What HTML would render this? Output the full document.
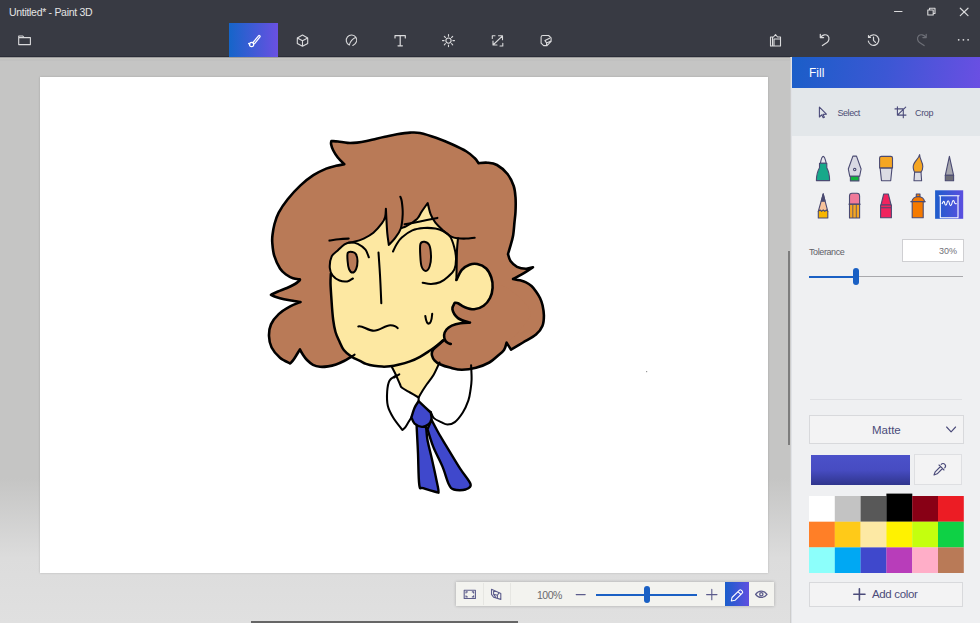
<!DOCTYPE html>
<html><head><meta charset="utf-8">
<style>
*{margin:0;padding:0;box-sizing:border-box}
html,body{width:980px;height:623px;overflow:hidden;font-family:"Liberation Sans",sans-serif}
body{position:relative;background:#c6c6c6}
.a{position:absolute}
#top{left:0;top:0;width:980px;height:57px;background:#383a43}
#title{left:9px;top:5.8px;font-size:10.5px;letter-spacing:-0.3px;color:#e4e4e4;white-space:nowrap}
#work{left:0;top:57px;width:791px;height:566px;background:linear-gradient(#c5c5c4 0,#c5c5c4 421px,#dcdcdc 501px,#e0e0e0 566px)}
#shadowtop{left:0;top:57px;width:791px;height:4px;background:linear-gradient(#8a8a8c 0,#c7c6c3 1.5px,#c7c6c3 2px,#bdbdbd 3px,#c5c5c4 4px)}
#canvas{left:40px;top:77px;width:728px;height:496px;background:#fff;box-shadow:0 0 2px rgba(0,0,0,.18)}
#panel{left:791px;top:57px;width:189px;height:566px;background:#eff0f2;border-left:1px solid #e0e2e6}
#phead{left:0;top:0;width:189px;height:31px;background:linear-gradient(100deg,#1a5ec8 0%,#3c57d4 50%,#6b4fe3 100%)}
#phead span{position:absolute;left:17px;top:9px;color:#fff;font-size:12px;letter-spacing:0}
#selcrop{left:0;top:31px;width:189px;height:47.5px;background:#e3e7ea}
.pt{position:absolute;color:#4c4c74;font-size:10px;white-space:nowrap}
svg{position:absolute;overflow:visible}
.ico{stroke:#d6d6d8;fill:none;stroke-width:1.1}
</style></head><body>
<div id="top" class="a"></div>
<div class="a" style="left:0;top:56px;width:791px;height:1px;background:#2b2d37"></div>
<div id="title" class="a">Untitled* - Paint 3D</div>
<div id="work" class="a"></div>
<div id="shadowtop" class="a"></div>
<div id="canvas" class="a"></div>
<div class="a" style="left:789.5px;top:57px;width:1.5px;height:566px;background:#cdcdcd"></div>
<svg width="980" height="623" viewBox="0 0 980 623" style="left:0;top:0">
<g stroke="none">
<path fill="#b97a57" d="M351.6 356.6 C350.3 357.3 346.6 359.7 344.0 361.0 C341.4 362.3 338.7 363.6 336.0 364.5 C333.3 365.4 330.7 366.0 328.0 366.4 C325.3 366.8 322.5 367.1 320.0 366.8 C317.5 366.5 315.2 365.9 313.0 364.8 C310.8 363.7 308.8 361.8 307.0 360.0 C305.2 358.2 303.7 355.8 302.5 354.0 C301.3 352.2 300.3 350.2 299.9 349.4 C298.9 351.0 295.6 356.6 294.0 359.0 C292.4 361.4 290.8 362.8 290.2 363.5 C288.5 362.6 283.1 360.5 280.0 357.8 C276.9 355.1 273.4 351.1 271.6 347.5 C269.8 343.9 269.1 339.9 269.0 336.0 C268.9 332.1 269.4 328.0 271.0 324.4 C272.6 320.8 275.5 317.1 278.7 314.1 C281.9 311.1 286.6 308.4 290.2 306.4 C293.8 304.4 298.8 302.7 300.5 302.0 C299.4 301.8 296.8 301.5 294.0 301.0 C291.2 300.5 287.0 299.9 284.0 299.2 C281.0 298.5 278.2 297.7 276.0 297.0 C273.8 296.3 271.8 295.2 271.0 294.8 C272.2 294.2 275.3 292.6 278.0 291.5 C280.7 290.4 284.2 289.2 287.0 288.0 C289.8 286.8 292.9 285.2 295.0 284.0 C297.1 282.8 298.7 281.3 299.5 280.5 C300.3 279.7 299.8 279.6 299.9 279.4 C298.8 279.2 295.3 279.0 293.0 278.2 C290.7 277.4 288.2 276.1 286.0 274.5 C283.8 272.9 282.0 271.6 280.0 268.5 C278.0 265.4 275.5 259.9 274.2 255.7 C272.9 251.4 272.6 246.4 272.3 243.0 C272.0 239.6 272.1 238.2 272.5 235.0 C272.9 231.8 273.5 227.7 274.5 224.0 C275.5 220.3 276.5 216.7 278.7 212.6 C280.9 208.5 284.1 203.8 287.7 199.3 C291.3 194.8 296.2 189.4 300.5 185.4 C304.8 181.4 309.1 178.0 313.4 175.2 C317.7 172.4 322.4 170.2 326.2 168.6 C330.0 167.0 333.0 166.5 336.0 165.8 C339.0 165.1 342.9 164.5 344.3 164.2 C343.2 163.1 339.6 159.8 337.8 157.5 C336.0 155.2 334.4 152.7 333.3 150.5 C332.2 148.3 331.4 145.8 331.1 144.2 C330.8 142.6 331.3 141.5 331.4 141.0 C332.5 141.1 335.3 141.2 338.0 141.5 C340.7 141.8 344.3 142.7 347.5 142.9 C350.7 143.1 353.9 142.9 357.1 142.6 C360.3 142.3 363.5 141.7 366.7 141.0 C369.9 140.3 373.3 139.4 376.4 138.7 C379.4 138.0 381.6 137.5 385.0 136.8 C388.4 136.1 392.8 135.0 397.0 134.3 C401.2 133.6 406.2 132.8 410.0 132.6 C413.8 132.4 415.7 132.1 420.0 133.0 C424.3 133.9 430.7 135.9 436.0 137.8 C441.3 139.7 446.9 142.0 452.0 144.3 C457.1 146.6 462.7 149.2 466.5 151.5 C470.3 153.8 472.6 156.1 474.6 158.0 C476.6 159.9 477.9 162.3 478.6 163.2 C480.1 163.1 484.3 162.4 487.4 162.7 C490.5 163.0 493.6 163.1 497.0 165.0 C500.4 166.9 504.7 170.5 507.5 174.0 C510.3 177.5 512.4 182.1 513.7 186.0 C515.0 189.9 515.2 192.9 515.5 197.2 C515.8 201.5 515.7 207.6 515.5 211.7 C515.3 215.8 514.9 218.1 514.5 222.0 C514.1 225.9 513.8 231.5 513.1 235.4 C512.4 239.3 511.4 242.6 510.5 245.7 C509.6 248.8 508.4 252.6 508.0 254.0 C508.4 255.2 509.0 259.0 510.5 261.1 C512.0 263.2 514.4 265.6 517.0 266.9 C519.6 268.2 523.2 268.8 525.9 268.8 C528.6 268.9 531.8 267.5 533.0 267.2 C531.6 268.1 528.0 270.6 524.7 272.6 C521.4 274.6 515.0 277.9 513.1 279.0 C514.2 279.2 517.9 279.8 520.0 280.3 C522.1 280.9 524.1 281.4 526.0 282.3 C527.9 283.2 529.8 284.5 531.5 286.0 C533.2 287.5 534.6 289.5 536.0 291.5 C537.4 293.5 538.9 295.7 540.0 298.0 C541.1 300.3 542.0 302.6 542.6 305.5 C543.2 308.4 543.9 312.0 543.9 315.4 C543.9 318.8 543.7 322.8 542.4 326.0 C541.1 329.2 539.2 331.9 536.0 334.6 C532.8 337.4 527.2 340.0 523.0 342.5 C518.8 345.0 513.0 348.4 511.0 349.6 C510.3 348.4 507.3 343.8 506.6 342.6 C506.2 343.8 505.6 347.7 504.0 350.0 C502.4 352.3 499.4 354.4 497.0 356.5 C494.6 358.6 492.8 360.6 489.3 362.5 C485.8 364.4 480.6 366.6 476.0 367.8 C471.4 369.0 466.3 369.8 462.0 369.8 C457.7 369.8 453.7 368.5 450.0 367.6 C446.3 366.7 442.6 365.4 440.0 364.2 C437.4 363.0 435.8 361.8 434.5 360.3 C433.2 358.9 432.4 357.1 432.0 355.5 C431.6 353.9 431.8 352.4 432.4 351.0 C433.0 349.6 434.3 348.5 435.5 347.3 C436.7 346.1 438.2 345.1 439.5 344.0 C440.8 342.9 442.8 341.1 443.5 340.5 L400 345 Z"/>
<path fill="#fde8a2" d="M330.5 278.0 C330.4 276.3 329.6 271.6 329.8 268.0 C330.0 264.4 330.3 259.4 331.7 256.4 C333.1 253.4 335.9 252.2 338.0 250.2 C340.1 248.2 342.4 245.7 344.5 244.4 C346.6 243.1 349.3 242.9 350.9 242.5 C352.5 242.1 352.0 242.5 354.1 241.8 C356.2 241.2 360.5 240.1 363.7 238.6 C366.9 237.1 370.3 235.4 373.4 232.8 C376.4 230.2 380.0 225.9 382.0 223.2 C384.0 220.5 384.6 219.1 385.2 216.7 C385.8 214.3 385.8 210.1 385.9 208.8 C386.0 210.5 386.2 214.8 386.4 218.9 C386.6 223.0 386.9 229.0 387.3 233.3 C387.7 237.6 388.6 243.0 388.8 244.9 C389.8 243.8 393.2 240.4 395.0 238.1 C396.8 235.8 398.4 232.7 399.5 231.0 C400.6 229.3 401.4 228.5 401.8 228.0 C402.5 227.7 404.4 227.1 406.0 226.3 C407.6 225.5 409.8 224.1 411.3 223.2 C412.8 222.2 413.9 221.5 415.0 220.6 C416.1 219.7 417.1 219.1 418.2 217.5 C419.3 215.9 420.3 213.7 421.9 211.3 C423.5 208.9 426.7 204.4 427.7 203.0 C428.2 204.8 429.3 210.8 430.6 214.1 C431.9 217.4 433.3 220.0 435.4 222.7 C437.5 225.4 440.5 228.1 443.1 230.4 C445.8 232.7 448.8 235.3 451.3 236.6 C453.8 237.9 456.9 238.0 458.0 238.3 C457.8 240.2 457.2 245.6 457.0 250.0 C456.8 254.4 456.8 260.0 456.7 265.0 C456.6 270.0 456.4 277.5 456.4 280.0 C457.3 278.3 459.6 272.4 461.8 269.8 C464.0 267.2 466.9 265.7 469.5 264.7 C472.1 263.7 474.4 263.4 477.2 264.0 C480.0 264.6 483.8 266.2 486.2 268.5 C488.6 270.8 490.2 274.3 491.3 277.5 C492.4 280.7 492.8 284.4 492.6 287.8 C492.4 291.2 491.5 295.0 490.0 298.0 C488.5 301.0 486.2 303.8 483.6 305.7 C481.0 307.6 477.3 309.1 474.1 309.3 C470.9 309.5 467.1 308.0 464.4 307.0 C461.7 306.0 459.6 303.9 458.0 303.2 C456.4 302.5 455.3 302.9 454.8 302.8 C458.7 304.3 475.1 307.1 478.0 312.0 C480.9 316.9 477.8 327.3 472.0 332.0 C466.2 336.7 447.9 338.8 443.1 340.2 C442.1 341.0 439.6 343.4 437.3 345.2 C435.1 347.0 432.5 348.9 429.6 350.8 C426.7 352.7 423.3 355.0 420.0 356.8 C416.7 358.6 413.6 360.1 410.0 361.4 C406.4 362.7 401.5 364.0 398.2 364.8 C394.9 365.6 392.7 366.0 390.0 366.3 C387.3 366.6 384.8 366.7 382.1 366.6 C379.4 366.5 376.7 366.2 374.0 365.8 C371.3 365.4 368.3 364.7 366.0 363.9 C363.7 363.1 362.4 362.1 360.0 360.9 C357.6 359.7 354.3 358.6 351.6 356.8 C348.9 355.0 345.9 352.7 343.8 350.0 C341.7 347.3 340.4 343.5 339.0 340.5 C337.6 337.5 336.5 335.4 335.5 332.0 C334.5 328.6 333.9 325.3 333.2 320.0 C332.5 314.7 331.9 306.1 331.5 300.0 C331.1 293.9 330.7 287.1 330.5 283.4 C330.3 279.7 330.5 278.9 330.5 278.0 Z"/>
<path fill="#fde8a2" d="M391.6 366.6 L396.7 375.5 L400.5 385.8 L409.5 392.2 L418.6 397.5 L422.4 391.0 L427.0 384.0 L433.5 375.0 L439.5 362.5 L440.0 350.0 L410.0 355.0 L390.0 362.0 Z"/>
<path fill="#b97a57" d="M443.5 340.5 C442.8 341.1 440.8 342.9 439.5 344.0 C438.2 345.1 436.7 346.1 435.5 347.3 C434.3 348.5 433.0 349.6 432.4 351.0 C431.8 352.4 431.6 353.9 432.0 355.5 C432.4 357.1 433.2 358.9 434.5 360.3 C435.8 361.8 437.4 363.0 440.0 364.2 C442.6 365.4 446.3 366.7 450.0 367.6 C453.7 368.5 457.7 369.8 462.0 369.8 C466.3 369.8 471.4 369.0 476.0 367.8 C480.6 366.6 485.8 364.4 489.3 362.5 C492.8 360.6 494.6 358.6 497.0 356.5 C499.4 354.4 502.4 352.3 504.0 350.0 C505.6 347.7 506.2 343.8 506.6 342.6 C508.8 340.5 516.1 335.4 520.0 330.0 C523.9 324.6 533.3 317.5 530.0 310.0 C526.7 302.5 507.7 285.7 500.0 285.0 C492.3 284.3 487.9 301.6 483.6 305.7 C479.3 309.8 477.3 309.1 474.1 309.3 C470.9 309.5 467.1 308.0 464.4 307.0 C461.7 306.0 459.6 303.9 458.0 303.2 C456.4 302.5 455.3 302.9 454.8 302.8 C454.4 303.9 451.9 306.8 452.4 309.3 C452.9 311.9 455.1 315.9 458.0 318.1 C460.9 320.3 468.0 321.9 470.0 322.6 C468.4 322.7 463.5 322.7 460.5 323.2 C457.5 323.7 454.1 324.6 451.8 325.6 C449.5 326.7 447.8 327.9 446.5 329.5 C445.2 331.1 444.3 333.3 444.1 335.2 C443.9 337.1 444.7 339.6 445.5 341.0 C446.3 342.4 448.0 342.9 448.9 343.4 C449.8 343.9 450.5 343.8 450.8 343.9 Z"/>
<path fill="#fde8a2" d="M456.4 280.0 C457.3 278.3 459.6 272.4 461.8 269.8 C464.0 267.2 466.9 265.7 469.5 264.7 C472.1 263.7 474.4 263.4 477.2 264.0 C480.0 264.6 483.8 266.2 486.2 268.5 C488.6 270.8 490.2 274.3 491.3 277.5 C492.4 280.7 492.8 284.4 492.6 287.8 C492.4 291.2 491.5 295.0 490.0 298.0 C488.5 301.0 486.2 303.8 483.6 305.7 C481.0 307.6 477.3 309.1 474.1 309.3 C470.9 309.5 467.1 308.0 464.4 307.0 C461.7 306.0 459.6 303.9 458.0 303.2 C456.4 302.5 455.3 302.9 454.8 302.8 Z"/>
<path fill="#b97a57" stroke="#000" stroke-width="2" d="M352.5 252.0 C353.9 252.2 355.2 252.8 356.0 254.3 C356.8 255.8 357.5 258.6 357.5 261.0 C357.5 263.4 357.0 266.9 356.2 268.8 C355.4 270.7 353.8 272.6 352.6 272.6 C351.4 272.6 349.8 270.9 349.0 269.0 C348.2 267.1 347.8 263.7 347.6 261.0 C347.4 258.3 347.0 254.3 347.8 252.8 C348.6 251.3 351.1 251.8 352.5 252.0 Z"/>
<path fill="#b97a57" stroke="#000" stroke-width="2" d="M424.5 241.8 C426.0 242.0 428.2 242.8 429.3 245.2 C430.4 247.6 430.9 252.4 431.0 256.0 C431.1 259.6 430.5 264.0 429.6 266.5 C428.7 269.0 427.1 270.9 425.8 270.9 C424.5 270.9 422.5 269.0 421.6 266.5 C420.7 264.0 420.5 259.8 420.3 256.0 C420.1 252.2 419.7 246.4 420.4 244.0 C421.1 241.6 423.0 241.6 424.5 241.8 Z"/>
</g>
<g fill="none" stroke="#000" stroke-linecap="round" stroke-linejoin="round">
<path stroke-width="2.6" d="M351.6 356.6 C350.3 357.3 346.6 359.7 344.0 361.0 C341.4 362.3 338.7 363.6 336.0 364.5 C333.3 365.4 330.7 366.0 328.0 366.4 C325.3 366.8 322.5 367.1 320.0 366.8 C317.5 366.5 315.2 365.9 313.0 364.8 C310.8 363.7 308.8 361.8 307.0 360.0 C305.2 358.2 303.7 355.8 302.5 354.0 C301.3 352.2 300.3 350.2 299.9 349.4 C298.9 351.0 295.6 356.6 294.0 359.0 C292.4 361.4 290.8 362.8 290.2 363.5 C288.5 362.6 283.1 360.5 280.0 357.8 C276.9 355.1 273.4 351.1 271.6 347.5 C269.8 343.9 269.1 339.9 269.0 336.0 C268.9 332.1 269.4 328.0 271.0 324.4 C272.6 320.8 275.5 317.1 278.7 314.1 C281.9 311.1 286.6 308.4 290.2 306.4 C293.8 304.4 298.8 302.7 300.5 302.0 C299.4 301.8 296.8 301.5 294.0 301.0 C291.2 300.5 287.0 299.9 284.0 299.2 C281.0 298.5 278.2 297.7 276.0 297.0 C273.8 296.3 271.8 295.2 271.0 294.8 C272.2 294.2 275.3 292.6 278.0 291.5 C280.7 290.4 284.2 289.2 287.0 288.0 C289.8 286.8 292.9 285.2 295.0 284.0 C297.1 282.8 298.7 281.3 299.5 280.5 C300.3 279.7 299.8 279.6 299.9 279.4 C298.8 279.2 295.3 279.0 293.0 278.2 C290.7 277.4 288.2 276.1 286.0 274.5 C283.8 272.9 282.0 271.6 280.0 268.5 C278.0 265.4 275.5 259.9 274.2 255.7 C272.9 251.4 272.6 246.4 272.3 243.0 C272.0 239.6 272.1 238.2 272.5 235.0 C272.9 231.8 273.5 227.7 274.5 224.0 C275.5 220.3 276.5 216.7 278.7 212.6 C280.9 208.5 284.1 203.8 287.7 199.3 C291.3 194.8 296.2 189.4 300.5 185.4 C304.8 181.4 309.1 178.0 313.4 175.2 C317.7 172.4 322.4 170.2 326.2 168.6 C330.0 167.0 333.0 166.5 336.0 165.8 C339.0 165.1 342.9 164.5 344.3 164.2 C343.2 163.1 339.6 159.8 337.8 157.5 C336.0 155.2 334.4 152.7 333.3 150.5 C332.2 148.3 331.4 145.8 331.1 144.2 C330.8 142.6 331.3 141.5 331.4 141.0 C332.5 141.1 335.3 141.2 338.0 141.5 C340.7 141.8 344.3 142.7 347.5 142.9 C350.7 143.1 353.9 142.9 357.1 142.6 C360.3 142.3 363.5 141.7 366.7 141.0 C369.9 140.3 373.3 139.4 376.4 138.7 C379.4 138.0 381.6 137.5 385.0 136.8 C388.4 136.1 392.8 135.0 397.0 134.3 C401.2 133.6 406.2 132.8 410.0 132.6 C413.8 132.4 415.7 132.1 420.0 133.0 C424.3 133.9 430.7 135.9 436.0 137.8 C441.3 139.7 446.9 142.0 452.0 144.3 C457.1 146.6 462.7 149.2 466.5 151.5 C470.3 153.8 472.6 156.1 474.6 158.0 C476.6 159.9 477.9 162.3 478.6 163.2 C480.1 163.1 484.3 162.4 487.4 162.7 C490.5 163.0 493.6 163.1 497.0 165.0 C500.4 166.9 504.7 170.5 507.5 174.0 C510.3 177.5 512.4 182.1 513.7 186.0 C515.0 189.9 515.2 192.9 515.5 197.2 C515.8 201.5 515.7 207.6 515.5 211.7 C515.3 215.8 514.9 218.1 514.5 222.0 C514.1 225.9 513.8 231.5 513.1 235.4 C512.4 239.3 511.4 242.6 510.5 245.7 C509.6 248.8 508.4 252.6 508.0 254.0 C508.4 255.2 509.0 259.0 510.5 261.1 C512.0 263.2 514.4 265.6 517.0 266.9 C519.6 268.2 523.2 268.8 525.9 268.8 C528.6 268.9 531.8 267.5 533.0 267.2 C531.6 268.1 528.0 270.6 524.7 272.6 C521.4 274.6 515.0 277.9 513.1 279.0 C514.2 279.2 517.9 279.8 520.0 280.3 C522.1 280.9 524.1 281.4 526.0 282.3 C527.9 283.2 529.8 284.5 531.5 286.0 C533.2 287.5 534.6 289.5 536.0 291.5 C537.4 293.5 538.9 295.7 540.0 298.0 C541.1 300.3 542.0 302.6 542.6 305.5 C543.2 308.4 543.9 312.0 543.9 315.4 C543.9 318.8 543.7 322.8 542.4 326.0 C541.1 329.2 539.2 331.9 536.0 334.6 C532.8 337.4 527.2 340.0 523.0 342.5 C518.8 345.0 513.0 348.4 511.0 349.6 C510.3 348.4 507.3 343.8 506.6 342.6 C506.2 343.8 505.6 347.7 504.0 350.0 C502.4 352.3 499.4 354.4 497.0 356.5 C494.6 358.6 492.8 360.6 489.3 362.5 C485.8 364.4 480.6 366.6 476.0 367.8 C471.4 369.0 466.3 369.8 462.0 369.8 C457.7 369.8 453.7 368.5 450.0 367.6 C446.3 366.7 442.6 365.4 440.0 364.2 C437.4 363.0 435.8 361.8 434.5 360.3 C433.2 358.9 432.4 357.1 432.0 355.5 C431.6 353.9 431.8 352.4 432.4 351.0 C433.0 349.6 434.3 348.5 435.5 347.3 C436.7 346.1 438.2 345.1 439.5 344.0 C440.8 342.9 442.8 341.1 443.5 340.5"/>
<path stroke-width="2.6" d="M456.4 280.0 C457.3 278.3 459.6 272.4 461.8 269.8 C464.0 267.2 466.9 265.7 469.5 264.7 C472.1 263.7 474.4 263.4 477.2 264.0 C480.0 264.6 483.8 266.2 486.2 268.5 C488.6 270.8 490.2 274.3 491.3 277.5 C492.4 280.7 492.8 284.4 492.6 287.8 C492.4 291.2 491.5 295.0 490.0 298.0 C488.5 301.0 486.2 303.8 483.6 305.7 C481.0 307.6 477.3 309.1 474.1 309.3 C470.9 309.5 467.1 308.0 464.4 307.0 C461.7 306.0 459.6 303.9 458.0 303.2 C456.4 302.5 455.3 302.9 454.8 302.8 C454.4 303.9 451.9 306.8 452.4 309.3 C452.9 311.9 455.1 315.9 458.0 318.1 C460.9 320.3 468.0 321.9 470.0 322.6 C468.4 322.7 463.5 322.7 460.5 323.2 C457.5 323.7 454.1 324.6 451.8 325.6 C449.5 326.7 447.8 327.9 446.5 329.5 C445.2 331.1 444.3 333.3 444.1 335.2 C443.9 337.1 444.7 339.6 445.5 341.0 C446.3 342.4 448.0 342.9 448.9 343.4 C449.8 343.9 450.5 343.8 450.8 343.9"/>
<path stroke-width="2.5" d="M330.8 273.7 C330.8 275.3 330.4 279.0 330.5 283.4 C330.6 287.8 331.1 293.9 331.5 300.0 C331.9 306.1 332.5 314.7 333.2 320.0 C333.9 325.3 334.5 328.6 335.5 332.0 C336.5 335.4 337.6 337.5 339.0 340.5 C340.4 343.5 341.7 347.3 343.8 350.0 C345.9 352.7 348.9 355.0 351.6 356.8 C354.3 358.6 357.6 359.7 360.0 360.9 C362.4 362.1 363.7 363.1 366.0 363.9 C368.3 364.7 371.3 365.4 374.0 365.8 C376.7 366.2 379.4 366.5 382.1 366.6 C384.8 366.7 387.3 366.6 390.0 366.3 C392.7 366.0 394.9 365.6 398.2 364.8 C401.5 364.0 406.4 362.7 410.0 361.4 C413.6 360.1 416.7 358.6 420.0 356.8 C423.3 355.0 426.7 352.7 429.6 350.8 C432.5 348.9 435.1 347.0 437.3 345.2 C439.6 343.4 442.1 341.0 443.1 340.2"/>
<path stroke-width="2.05" d="M368.8 257.3 C368.2 256.0 367.3 251.8 365.5 249.6 C363.7 247.4 360.2 245.1 357.8 243.9 C355.4 242.7 353.1 242.4 350.9 242.5 C348.7 242.6 346.6 243.1 344.5 244.4 C342.4 245.7 340.1 248.2 338.0 250.2 C335.9 252.2 333.1 253.4 331.7 256.4 C330.3 259.4 329.6 264.8 329.8 268.0 C330.0 271.2 331.1 273.5 332.7 275.6 C334.3 277.7 337.1 279.5 339.5 280.5 C341.9 281.5 345.0 281.7 347.2 281.4 C349.4 281.1 351.9 279.0 352.9 278.5"/>
<path stroke-width="2.05" d="M349.0 242.5 C349.9 242.4 351.7 242.5 354.1 241.8 C356.6 241.2 360.5 240.1 363.7 238.6 C366.9 237.1 370.3 235.4 373.4 232.8 C376.4 230.2 380.0 225.9 382.0 223.2 C384.0 220.5 384.6 219.1 385.2 216.7 C385.8 214.3 385.8 210.1 385.9 208.8 C386.0 210.5 386.2 214.8 386.4 218.9 C386.6 223.0 386.9 229.0 387.3 233.3 C387.7 237.6 388.6 243.0 388.8 244.9 C389.8 243.8 393.0 240.8 395.0 238.1 C397.0 235.4 399.5 232.5 400.8 228.5 C402.1 224.5 402.5 218.6 402.7 214.1 C402.9 209.6 402.2 204.4 401.8 201.5 C401.4 198.6 400.6 197.5 400.3 196.7"/>
<path stroke-width="2.05" d="M329.4 240.6 C331.0 240.4 335.8 239.6 339.0 239.3 C342.2 239.0 347.1 238.7 348.7 238.6"/>
<path stroke-width="2.05" d="M404.6 224.2 C407.2 223.8 414.5 222.6 420.0 221.5 C425.5 220.4 434.5 218.5 437.4 217.9"/>
<path stroke-width="2.05" d="M401.8 228.0 C402.5 227.7 404.4 227.1 406.0 226.3 C407.6 225.5 409.8 224.1 411.3 223.2 C412.8 222.2 413.9 221.5 415.0 220.6 C416.1 219.7 417.1 219.1 418.2 217.5 C419.3 215.9 420.3 213.7 421.9 211.3 C423.5 208.9 426.7 204.4 427.7 203.0 C428.2 204.8 429.3 210.8 430.6 214.1 C431.9 217.4 433.3 220.0 435.4 222.7 C437.5 225.4 440.5 228.1 443.1 230.4 C445.8 232.7 448.8 235.3 451.3 236.6 C453.8 237.9 455.6 238.0 458.0 238.3 C460.4 238.6 463.2 238.7 466.0 238.6 C468.8 238.5 473.2 237.8 474.7 237.7"/>
<path stroke-width="2.05" d="M393.0 251.5 C393.6 250.3 395.0 246.8 396.5 244.5 C398.0 242.2 399.2 239.9 401.8 237.6 C404.4 235.2 408.6 232.0 412.3 230.4 C416.0 228.8 420.0 228.3 423.9 228.0 C427.8 227.7 432.2 228.0 435.4 228.5 C438.6 229.0 440.6 229.7 443.0 231.0 C445.4 232.3 448.1 233.9 450.0 236.5 C451.9 239.1 453.1 243.1 454.1 246.7 C455.1 250.3 455.9 254.2 456.0 258.0 C456.1 261.8 455.7 266.3 454.4 269.4 C453.1 272.5 450.4 274.5 448.0 276.7 C445.6 278.9 442.8 281.1 440.0 282.3 C437.2 283.5 434.0 283.8 431.1 283.9 C428.2 284.0 424.1 282.9 422.7 282.7"/>
<path stroke-width="2.05" d="M458.0 238.3 C457.8 240.2 457.2 245.6 457.0 250.0 C456.8 254.4 456.8 260.0 456.7 265.0 C456.6 270.0 456.4 277.5 456.4 280.0"/>
<path stroke-width="2.05" d="M392.0 367.2 C392.6 368.4 394.4 371.7 395.7 374.5 C397.0 377.3 398.8 381.8 399.9 384.0 C400.9 386.2 400.3 386.4 402.0 387.8 C403.7 389.2 407.2 390.9 410.0 392.5 C412.8 394.1 417.2 396.7 418.6 397.5 C418.6 398.1 418.6 400.6 418.6 401.2"/>
<path stroke-width="2.05" d="M394.1 377.5 C395.0 377.0 398.4 374.8 399.3 374.3"/>
<path stroke-width="2.05" d="M439.5 362.5 C438.5 364.6 435.6 371.4 433.5 375.0 C431.4 378.6 428.9 381.3 427.0 384.0 C425.1 386.7 423.8 388.8 422.4 391.0 C421.0 393.2 419.2 396.4 418.6 397.5"/>
<path stroke-width="2.05" d="M396.0 375.7 C394.9 376.5 391.1 377.9 389.6 380.5 C388.1 383.1 387.5 387.1 387.2 391.3 C386.9 395.5 386.8 401.4 387.8 405.8 C388.8 410.2 390.9 413.8 393.3 417.8 C395.7 421.8 400.8 427.9 402.3 429.9 C402.8 429.5 404.0 429.0 405.0 427.7 C406.0 426.4 407.4 423.7 408.5 422.0 C409.6 420.3 410.9 418.1 411.4 417.3"/>
<path stroke-width="2.05" d="M430.7 411.7 C431.2 412.8 432.2 416.4 433.9 418.1 C435.6 419.8 438.8 421.0 441.1 422.1 C443.4 423.2 445.2 424.5 447.5 424.5 C449.8 424.5 452.2 424.1 454.8 422.1 C457.4 420.1 460.5 416.1 462.8 412.5 C465.1 408.9 467.1 404.1 468.4 400.4 C469.7 396.6 470.0 393.5 470.5 390.0 C471.0 386.5 471.5 383.5 471.6 379.4 C471.7 375.3 471.2 367.6 471.1 365.3"/>
<path stroke-width="2.05" d="M351.0 357.2 C351.6 356.8 354.0 355.0 354.6 354.6"/>
<path stroke-width="2.05" d="M358.3 326.4 C362.5 325.3 368 330.8 373.9 330.8 C380 330.8 385 325.2 390.4 325.3 C394 325.4 396.5 326.6 397.7 328.2"/>
<path stroke-width="2.05" d="M378.5 252.5 C378.8 256.2 379.5 266.6 380.0 275.0 C380.5 283.4 381.1 298.5 381.3 303.2"/>
<path stroke-width="2.05" d="M425.3 316 C425.9 320 426.9 323.6 428.6 323.6 C430.5 323.6 431.8 319 432.2 313.8"/>
</g>
<g stroke="#000" stroke-width="2.4" stroke-linejoin="round" stroke-linecap="round" fill="#3f48cc">
<path d="M417.0 424.0 C416.9 424.6 416.5 422.9 416.7 427.8 C416.9 432.7 417.6 444.0 418.0 453.5 C418.4 463.0 418.4 479.2 419.3 485.0 C420.2 490.8 419.9 486.9 423.1 488.2 C426.3 489.5 435.9 491.9 438.5 492.7 C438.4 491.7 439.0 492.4 437.9 486.9 C436.8 481.4 433.8 467.6 432.1 459.9 C430.4 452.2 428.6 445.8 427.6 440.7 C426.6 435.6 426.7 432.1 426.3 429.3 C425.9 426.5 425.2 424.9 425.0 424.0 Z"/>
<path d="M427.5 429.3 C428.5 432.3 430.9 440.9 433.4 447.1 C435.9 453.3 439.8 460.2 442.4 466.4 C445.0 472.6 446.9 480.4 448.8 484.3 C450.7 488.2 451.1 488.6 453.9 489.5 C456.7 490.4 462.7 490.4 465.5 489.5 C468.3 488.6 471.5 487.7 470.6 484.3 C469.7 480.9 464.4 475.3 460.3 468.9 C456.2 462.5 449.9 451.9 446.2 445.8 C442.5 439.7 440.4 436.4 438.0 432.0 C435.6 427.6 432.6 421.8 431.5 419.7 Z"/>
<path d="M418.6 401.2 C417.9 402.3 415.8 405.0 414.6 407.7 C413.4 410.4 411.9 415.7 411.4 417.3 C411.9 418.4 412.9 422.1 414.6 423.7 C416.4 425.3 419.6 426.8 421.9 426.9 C424.2 427.0 426.7 425.8 428.3 424.5 C429.9 423.2 431.1 420.9 431.5 418.9 C431.9 416.9 430.8 413.6 430.7 412.5 C428.7 410.6 420.6 403.1 418.6 401.2 Z"/>
</g>
<rect x="646" y="371" width="1.2" height="1.2" fill="#999"/>
</svg>
<svg width="980" height="57" style="left:0;top:0">
<defs>
<linearGradient id="actg" x1="0" y1="0" x2="1" y2="0"><stop offset="0" stop-color="#1565c9"/><stop offset="1" stop-color="#6a50e2"/></linearGradient>
</defs>
<rect x="229" y="23" width="49" height="34" fill="url(#actg)"/>
<g stroke="#dadadc" fill="none" stroke-width="1.1" stroke-linejoin="round" stroke-linecap="round">
<!-- window controls -->
<path d="M894.5 11.5 H902" />
<path d="M927.8 10 H933.2 V15 H927.8 Z M929.5 10 V8.3 H935 V13.5 H933.2" />
<path d="M960.3 8.2 L968 15.6 M968 8.2 L960.3 15.6" stroke-width="1.2"/>
<!-- folder -->
<path d="M18.7 36 H22.8 L24 37.6 H30.4 V44.6 H18.7 Z M18.7 37.6 H24"/>
<!-- cube -->
<path d="M302.5 35 L307.7 37.9 V43.4 L302.5 46.3 L297.3 43.4 V37.9 Z M297.3 37.9 L302.5 40.8 L307.7 37.9 M302.5 40.8 V46.3"/>
<!-- sticker -->
<path d="M355.9 37.3 A5.3 5.3 0 1 0 349.3 45.1 C350.2 41.6 352.4 38.8 355.9 37.3 M355.9 37.3 C357.6 40.2 356.6 43.6 352.8 45.5" />
<!-- T -->
<path d="M395 38 V35.7 H405.3 V38 M400.2 35.7 V45.8 M398 45.8 H402.4" stroke-width="1.2"/>
<!-- sun -->
<circle cx="448.5" cy="40.6" r="2.6"/>
<path d="M448.5 34.6 V36.2 M448.5 45 V46.6 M442.5 40.6 H444.1 M452.9 40.6 H454.5 M444.3 36.4 L445.4 37.5 M451.6 43.7 L452.7 44.8 M444.3 44.8 L445.4 43.7 M451.6 37.5 L452.7 36.4"/>
<!-- resize -->
<path d="M493 45 L502.5 35.8 M498.5 35.8 H502.5 V39.8 M493 41 V45 H497 M492.3 38.5 V35.8 H495 M500 46 H502.8 V43.3"/>
<!-- 3d library -->
<path d="M541.1 37.2 Q541.1 35.5 542.8 35.5 H548.6 L551.1 37.9 V41.4 L547 45.6 H543.6 L541.1 43.2 Z M545 40.6 L549.6 38.2 M545 40.6 L546.6 42.9 V45.5 M546.6 42.9 L551 41"/>
<!-- paste -->
<path d="M770.5 37 H773.5 L775.5 34.5 L777.5 37 H780.5 V46 H770.5 Z M774 39 H780.5 M774 39 V46 M772.5 37 V46"/>
<!-- undo -->
<path d="M820.3 34.3 V37.6 H823.6 M820.9 37 C822.5 34.6 826 34 827.9 35.8 C829.8 37.8 829 40.8 827 42.6 L822.4 45.6" stroke-width="1.2"/>
<!-- history -->
<path d="M869.2 37 A5.3 5.3 0 1 1 868.3 41 M868.5 35.5 V37.5 H870.5 M873.5 37 V40.3 L875.5 42.3" stroke-width="1.2"/>
<!-- redo dim -->
<path d="M926.2 34.3 V37.6 H922.9 M925.6 37 C924 34.6 920.5 34 918.6 35.8 C916.7 37.8 917.5 40.8 919.5 42.6 L924.1 45.6" stroke="#6d6f77" stroke-width="1.2"/>
</g>
<!-- brush active (white) -->
<g fill="none" stroke="#fff" stroke-width="1.2" stroke-linecap="round" stroke-linejoin="round">
<path d="M253 42.5 L258.5 35.8 C259.2 35 260.6 36 260 36.8 L254.6 43.7"/>
<circle cx="251.6" cy="44.5" r="2.1"/>
<path d="M248.6 43.5 L249.8 44.4"/>
</g>
<g fill="#dadadc">
<circle cx="958.7" cy="39.8" r="0.9"/><circle cx="963.4" cy="39.8" r="0.9"/><circle cx="968.1" cy="39.8" r="0.9"/>
</g>
</svg>

<div id="panel" class="a">
  <div id="phead" class="a"><span>Fill</span></div>
  <div id="selcrop" class="a"></div>
</div>
<div class="pt" style="left:837.5px;top:107.5px;font-size:9px;letter-spacing:-0.45px">Select</div>
<div class="pt" style="left:915px;top:107.5px;font-size:9px;letter-spacing:-0.35px">Crop</div>
<div class="pt" style="left:809px;top:246.5px;font-size:9px;letter-spacing:-0.4px;color:#606068">Tolerance</div>
<div class="a" style="left:902px;top:239px;width:62px;height:23px;background:#fff;border:1px solid #cfcfd2"></div>
<div class="pt" style="left:939px;top:246px;font-size:9px;color:#707078">30%</div>
<div class="a" style="left:809px;top:275.5px;width:47px;height:2px;background:#1a60c4"></div>
<div class="a" style="left:856px;top:275.8px;width:107px;height:1.4px;background:#a9a9ad"></div>
<div class="a" style="left:853px;top:268px;width:6.4px;height:17px;border-radius:3px;background:#1a60c4"></div>
<div class="a" style="left:810px;top:399px;width:152px;height:1px;background:#dfe0e3"></div>
<div class="a" style="left:809px;top:415px;width:155px;height:29px;background:#f3f3f4;border:1px solid #d8d9dc"></div>
<div class="pt" style="left:872px;top:423.5px;font-size:11.5px;color:#4b4b7a">Matte</div>
<div class="a" style="left:811px;top:454.5px;width:99px;height:30px;background:linear-gradient(#4b51c9 0%,#474cc2 50%,#2f358d 100%)"></div>
<div class="a" style="left:913.5px;top:454px;width:48.5px;height:31px;background:#f3f3f4;border:1px solid #dedfe2"></div>
<div class="a" style="left:809px;top:582px;width:154px;height:25px;background:#f3f3f4;border:1px solid #d8d9dc"></div>
<div class="pt" style="left:872px;top:588px;font-size:11.5px;letter-spacing:-0.35px;color:#4b4b7a">Add color</div>
<svg width="980" height="623" style="left:0;top:0">
<g fill="none" stroke="#4b4b7a" stroke-width="1.1" stroke-linejoin="round" stroke-linecap="round">
<!-- select arrow -->
<path d="M819.4 107.2 V117 L821.6 114.8 L823.2 117.8 L824.4 117.2 L823 114.4 L826.4 114.2 Z"/>
<!-- crop -->
<path d="M895 108.9 H903.3 V117.8 M897.4 106.8 V115.1 H906 M897.4 115.1 L905.7 107.1"/>
<!-- chevron -->
<path d="M946.6 427 L951.1 431.8 L955.6 427"/>
<!-- eyedropper -->
<path d="M934 475 L935.2 471.8 L940.5 466.5 L942.5 468.5 L937.2 473.8 Z M939 465 L944 470 M941.2 464.3 C942.2 463.3 944 463.5 944.8 464.3 C945.6 465.1 945.7 466.8 944.7 467.8"/>
<!-- plus -->
<path d="M853.8 594.3 H865 M859.4 588.7 V599.9" stroke-width="1.6"/>
</g>
<!-- brushes -->
<g stroke="#4a4a72" stroke-width="1.1" stroke-linejoin="round">
<!-- marker -->
<path fill="#e9e9ef" d="M820.4 163.2 C821 160 822 156.4 823.2 156.4 C824.4 156.4 825.5 160 826.2 163.2 Z"/>
<path fill="#17a88a" d="M819.5 163.2 H826.8 V167.8 C828.6 171 829.6 176 829.6 180.6 H816.4 C816.4 176 817.6 171 819.5 167.8 Z"/>
<!-- pen nib -->
<path fill="#d9d9e3" d="M852.9 156.1 H856.5 L861.1 169 L859.6 176.3 H849.8 L848.3 169 Z"/>
<circle cx="854.7" cy="169.6" r="1.2" fill="#fff"/>
<path fill="#10b33c" d="M850.4 176.3 H858.9 V180.9 H850.4 Z"/>
<!-- oil brush -->
<path fill="#dcdce4" d="M880.1 167.9 H892 L890.7 180.8 H881.5 Z"/>
<path fill="#f5a623" d="M879.6 158 C879.6 156.8 880.4 156.4 881.4 156.4 H890.8 C891.8 156.4 892.5 156.8 892.5 158 V167.9 H879.6 Z"/>
<!-- watercolor -->
<path fill="#dcdce4" d="M914.6 172 H921 L921.6 180.8 H914 Z"/>
<path fill="#f5a623" d="M919.6 154.6 C919 159 913 161.5 913.2 167 C913.3 170 914.5 172 914.6 172 H921 C922 171 922.8 169 922.8 166.5 C922.8 162 919.5 159 919.6 154.6 Z"/>
<!-- pixel pen -->
<path fill="#a6a6ae" d="M949.4 156.4 L953.6 175.3 H945.3 Z"/>
<path fill="#6b6b75" d="M945.3 175.3 H953.6 V180.8 H945.3 Z"/>
<!-- pencil -->
<path fill="#f7c39c" d="M823.2 193.8 L827.8 211.3 H818.3 Z"/>
<path fill="#4a4a72" d="M823.2 193.8 L825 201.2 H821.4 Z"/>
<path fill="#f7b500" d="M818.3 211.3 L820 209.8 L821.6 211.3 L823.2 209.8 L824.8 211.3 L826.4 209.8 L827.8 211.3 V218 H818.3 Z"/>
<!-- eraser -->
<path fill="#f07a9a" d="M849.5 204.2 V196 C849.5 194 850.5 193.2 852 193.2 H857 C858.6 193.2 859.6 194 859.6 196 V204.2 Z"/>
<path fill="#f5a623" d="M849.5 204.2 H859.6 V218 H849.5 Z"/>
<path fill="none" d="M848.3 204.2 H860.8 M852.8 204.2 V218 M856.3 204.2 V218" stroke-width="0.8"/>
<!-- crayon -->
<path fill="#f0235e" d="M883.7 194 H888.3 L891.1 205 H881 Z"/>
<path fill="#f0235e" d="M880.6 205 H891.4 V217.8 H880.6 Z M880.6 207.8 H891.4"/>
<!-- spray -->
<path fill="#f57a00" d="M916.3 196.7 V194 H920 V196.7 Z"/>
<path fill="#f57a00" d="M911.8 201.6 C912.5 198.5 915 196.7 918.2 196.7 C921.4 196.7 924 198.5 924.6 201.6 Z"/>
<path fill="#f57a00" d="M912.2 201.6 H923.2 V217.8 H912.2 Z M910.4 201.6 H925.6"/>
</g>
<!-- fill selected -->
<defs><linearGradient id="fillg" x1="0" y1="0" x2="1" y2="0"><stop offset="0" stop-color="#1e5dcb"/><stop offset="1" stop-color="#5b4fe0"/></linearGradient></defs>
<rect x="935.1" y="190.3" width="28.1" height="28.5" fill="url(#fillg)"/>
<g fill="none" stroke="#fff" stroke-width="1.1" stroke-linejoin="round">
<path d="M938.8 195.8 H959.5 M940.3 195.8 V217.8 H958 V195.8"/>
<path d="M942 204 C943 201 944 200.5 944.6 203 C945.2 206 946.5 206 947 203 C947.5 200 948.8 200 949.3 203 C949.8 206.5 951.5 206.5 952 203 C952.5 200 953.8 199.8 954.3 202 C954.6 203.5 955.5 204 956.7 203.5"/>
</g>
<!-- palette -->
<g stroke="none">
<rect x="809" y="496" width="25.9" height="25.8" fill="#ffffff"/>
<rect x="834.8" y="496" width="25.9" height="25.8" fill="#c3c3c3"/>
<rect x="860.6" y="496" width="25.9" height="25.8" fill="#585858"/>
<rect x="886.4" y="493.6" width="25.9" height="28.2" fill="#000000"/>
<rect x="912.2" y="496" width="25.9" height="25.8" fill="#880015"/>
<rect x="938" y="496" width="25.8" height="25.8" fill="#ec1c24"/>
<rect x="809" y="521.7" width="25.9" height="25.8" fill="#ff7f27"/>
<rect x="834.8" y="521.7" width="25.9" height="25.8" fill="#ffca18"/>
<rect x="860.6" y="521.7" width="25.9" height="25.8" fill="#fde9a4"/>
<rect x="886.4" y="521.7" width="25.9" height="25.8" fill="#fff200"/>
<rect x="912.2" y="521.7" width="25.9" height="25.8" fill="#c4ff0e"/>
<rect x="938" y="521.7" width="25.8" height="25.8" fill="#0ed145"/>
<rect x="809" y="547.4" width="25.9" height="25.6" fill="#8cfffb"/>
<rect x="834.8" y="547.4" width="25.9" height="25.6" fill="#00a8f3"/>
<rect x="860.6" y="547.4" width="25.9" height="25.6" fill="#3f48cc"/>
<rect x="886.4" y="547.4" width="25.9" height="25.6" fill="#b83dba"/>
<rect x="912.2" y="547.4" width="25.9" height="25.6" fill="#ffaec8"/>
<rect x="938" y="547.4" width="25.8" height="25.6" fill="#b97a57"/>
</g>
</svg>

<div class="a" style="left:455.5px;top:581.8px;width:318.5px;height:24.6px;background:#f3f3ef;box-shadow:0 0 3px rgba(0,0,0,.25)"></div>
<div class="a" style="left:482.5px;top:583px;width:1px;height:22px;background:#e6e6e2"></div>
<div class="a" style="left:509.5px;top:583px;width:1px;height:22px;background:#e6e6e2"></div>
<div class="a" style="left:724.8px;top:581.8px;width:24.2px;height:24.6px;background:linear-gradient(90deg,#1a5ecb,#5f4fe0)"></div>
<div class="pt" style="left:537px;top:589px;font-size:10.5px;letter-spacing:-0.5px;color:#6a6a6e">100%</div>
<div class="a" style="left:596px;top:593.6px;width:100.7px;height:2px;background:#1a60c4"></div>
<div class="a" style="left:643.7px;top:586.1px;width:6.2px;height:17px;border-radius:3px;background:#1a60c4"></div>
<div class="a" style="left:788px;top:251px;width:2px;height:194px;background:#7d7d7d"></div>
<div class="a" style="left:250.5px;top:621px;width:267px;height:2px;background:#666"></div>
<svg width="980" height="623" style="left:0;top:0">
<g fill="none" stroke="#5c5c8c" stroke-width="1.1" stroke-linejoin="round" stroke-linecap="round">
<!-- fit -->
<path d="M464.2 590.3 H475.4 V598.5 H464.2 Z M466 593 V591.9 H467.3 M473.6 593 V591.9 H472.3 M466 595.8 V596.9 H467.3 M473.6 595.8 V596.9 H472.3"/>
<!-- 3d view -->
<path d="M491.5 589.3 L500.8 593.4 V599.4 L493.6 597.3 L491.5 594.4 Z M493.6 590.3 V594.3 L496 597.9 M493.6 594.3 L497.4 595.3 L499.2 592.6 M497.4 595.3 V598.4"/>
<!-- minus -->
<path d="M576.2 594.6 H585.2"/>
<!-- plus -->
<path d="M706.6 594.6 H717 M711.8 589.4 V599.8"/>
<!-- eye -->
<path d="M755.6 594.3 C758.5 590 764 590 767 594.3 C764 598.5 758.5 598.5 755.6 594.3 Z" stroke-width="1.3"/>
<circle cx="761.3" cy="594.3" r="1.6" stroke-width="1.3"/>
</g>
<g fill="none" stroke="#fff" stroke-width="1.1" stroke-linejoin="round">
<path d="M731.3 601 L732 597.5 L739.3 590.3 C739.9 589.7 740.8 589.7 741.4 590.3 L742.2 591.1 C742.8 591.7 742.8 592.6 742.2 593.2 L735 600.3 Z M738 591.6 L741 594.6"/>
</g>
</svg>

</body></html>
